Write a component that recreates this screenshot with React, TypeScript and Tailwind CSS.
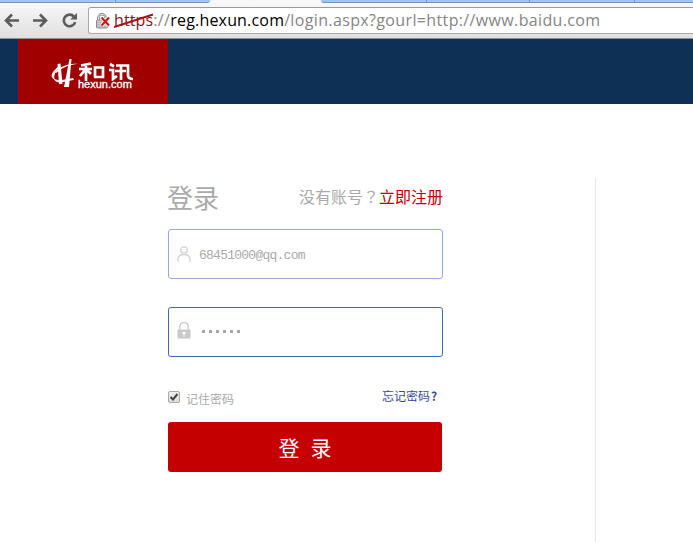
import React from "react";

const cjk = "font-['Noto_Sans_CJK_SC',sans-serif]";

function TabStrip() {
  return (
    <div className="flex h-[3px] shrink-0 bg-[#f7f7f7]">
      <div className="h-[3px] w-[115px] rounded-br-[2px] border-b border-[#7493bd] bg-[#9fc4f5]" />
      <div className="h-[3px] w-[95px] rounded-br-[3px] border-b border-l border-[#7493bd] bg-[#9fc4f5]" />
      <div className="w-[111px]" />
      <div className="h-[3px] w-[105px] rounded-bl-[3px] border-b border-[#7493bd] bg-[#9fc4f5]" />
      <div className="h-[3px] w-[103px] border-b border-l border-[#7493bd] bg-[#9fc4f5]" />
      <div className="h-[3px] w-[105px] border-b border-l border-[#7493bd] bg-[#9fc4f5]" />
      <div className="h-[3px] flex-1 border-b border-l border-[#7493bd] bg-[#9fc4f5]" />
    </div>
  );
}

function Toolbar() {
  return (
    <div className="flex h-9 shrink-0 border-b border-[#909090] bg-linear-to-b from-[#f8f8f8] to-[#dfdfdf]">
      <svg className="mt-[9px] ml-1 h-4 w-[74px] shrink-0" viewBox="0 0 74 16" fill="none" stroke="#5c5c5c" strokeWidth="2.6">
        <path d="M15 8.5H2M8 2.5L2 8.5L8 14.500" />
        <path d="M29 8.5H42M36 2.5L42 8.5L36 14.500" />
        <path d="M70 4.6A5.8 5.8 0 1 0 71.2 10.2" />
        <path d="M73 1V7.6H66.2Z" fill="#5c5c5c" stroke="none" />
      </svg>
      <div className="mt-1 ml-2.5 flex h-[27px] flex-1 rounded-l-[3px] border border-r-0 border-[#aaa] border-t-[#9a9a9a] bg-white">
        <svg className="mt-[5px] ml-1.5 h-[17px] w-[17px] shrink-0" viewBox="0 0 17 17">
          <path d="M3.5 8V4.8a3.5 3.5 0 0 1 7 0V8" fill="none" stroke="#8a8a8a" strokeWidth="2.6" />
          <path d="M3.5 8V4.8a3.5 3.5 0 0 1 7 0V8" fill="none" stroke="#ddd" strokeWidth="1" />
          <rect x="1.5" y="7" width="11" height="8" rx="1" fill="#ccc" stroke="#8a8a8a" />
          <path d="M2 9.5h9M2 11.5h9M2 13.5h9" stroke="#aaa" strokeWidth=".7" />
          <path d="M6.5 4.5L14 12.5M14 4.5L6.5 12.5" stroke="#fff" strokeWidth="4" />
          <path d="M6.5 4.5L14 12.5M14 4.5L6.5 12.5" stroke="#d01818" strokeWidth="2.2" />
        </svg>
        <div className="ml-[2px] font-['Open_Sans',sans-serif] text-[16px] leading-[24px] whitespace-nowrap text-[#858585]">
          <span className="relative inline-block tracking-[0.1px] text-[#8c1018]">
            https
            <svg className="absolute top-[5px] left-0 h-[16px] w-[40px]" viewBox="0 0 40 16">
              <path d="M0 14L39 1.5" stroke="#aa1018" strokeWidth="2" />
            </svg>
          </span>
          <span className="tracking-[0.4px]">://</span>
          <span className="tracking-[0.18px] text-black">reg.hexun.com</span>
          <span className="tracking-[0.36px]">/login.aspx?gourl=http://www.baidu.com</span>
        </div>
      </div>
    </div>
  );
}

function Logo() {
  return (
    <div className="ml-[18px] flex h-[65px] w-[150px] bg-[#a00000] pt-5 pl-[33px] text-white">
      <svg className="h-[30px] w-[27px] shrink-0" viewBox="0 0 27 30" fill="#fff">
        <path d="M6.500 5L9.500 4.500L11.500 25H8Z" />
        <path d="M18.500 0L20.500 0L18 28H13Z" />
        <path d="M7 8C4 11 1 14 1 16.500C1 20 5 22 11 21.400L22 19.500L22.500 20.500L11 22.800C5 23.600 2 21 3 16.500C3.500 14 5 11 8 9Z" stroke="#fff" strokeWidth=".8" />
        <path d="M4 13C9 8 17 4 27 5C18 5.500 11 9 5 14Z" />
      </svg>
      <div className="flex flex-col">
        <svg className="mt-[3px] h-[19px] w-[56px]" viewBox="0 0 56 19" fill="none" stroke="#fff" strokeWidth="2.700">
          <path d="M13 1.500L3 3.500M1 7H14M8 2V19M7 8L2 14M9 8L13 12M17 15V5.500H25V15H16M32 2L36 4.500M31 8H35V17L39 14M38 3.500H50V13Q50 17 55 17M37 9H48M43 3V18" />
        </svg>
        <div className="-mt-[1px] origin-left scale-x-[1.1] font-['Liberation_Sans',sans-serif] text-[10px] leading-[10px] [-webkit-text-stroke:0.3px_white]">hexun.com</div>
      </div>
    </div>
  );
}

function LoginForm() {
  return (
    <div className="w-[275px]">
      <div className="flex h-[51px] items-start justify-between whitespace-nowrap">
        <h1 className={`${cjk} mt-[3px] -ml-px text-[26px] leading-[32px] text-[#aaa]`}>登录</h1>
        <div className={`${cjk} mt-[6px] text-[16px] leading-6 text-[#aaa]`}>
          没有账号<span className="font-['Noto_Sans_CJK_TC',sans-serif]" lang="zh-TW">？</span>
          <a className="text-[#c00000]">立即注册</a>
        </div>
      </div>
      <div className="flex h-[50px] items-center rounded-[3px] border border-[#93addb] pl-2">
        <svg className="h-4 w-3.5" viewBox="0 0 14 16" fill="none" stroke="#d2d2d2" strokeWidth="1.3">
          <circle cx="7" cy="4" r="3.200" />
          <path d="M1 16V13.500Q1 8.500 7 8.500T13 13.500V16" />
        </svg>
        <span className="mt-[3px] ml-2 font-['Liberation_Mono',monospace] text-[13px] leading-5 tracking-[-0.75px] text-[#aaa]">68451000@qq.com</span>
      </div>
      <div className="mt-7 flex h-[50px] items-center rounded-[3px] border border-[#4469a8] pl-2">
        <svg className="-mt-1 h-[17px] w-[14px]" viewBox="0 0 14 17">
          <path d="M2.700 8V4.800a4.300 4.300 0 0 1 8.600 0V8" fill="none" stroke="#ccc" strokeWidth="1.400" />
          <path d="M.5 7.500h13v9H.5z" fill="#c9c9c9" />
          <path d="M5.500 10h3v2h-1v3h-1v-3h-1z" fill="#fff" />
        </svg>
        <div className="-mt-px ml-[11px] flex gap-1">
          {[0, 1, 2, 3, 4, 5].map((n) => (
            <i key={n} className="h-[3px] w-[3px] bg-[#a6a6a6]" />
          ))}
        </div>
      </div>
      <div className={`${cjk} flex h-[65px] items-start justify-between pt-[30px] text-[12px] leading-[18px]`}>
        <label className="flex text-[#aaa]">
          <span className="mt-1 mr-[6px] flex h-3 w-3 items-center justify-center rounded-[2px] border border-[#aaa] bg-linear-to-b from-[#eee] to-[#ddd]">
            <svg className="h-2.5 w-2.5 shrink-0" viewBox="0 0 10 10" fill="none" stroke="#444" strokeWidth="2">
              <path d="M1.500 5L4 7.500L8.500 2" />
            </svg>
          </span>
          <span className="mt-[3px]">记住密码</span>
        </label>
        <a className="mr-1 text-[#394d88]">忘记密码<b className="ml-px inline-block w-2">?</b></a>
      </div>
      <button className={`${cjk} flex h-[50px] w-[274px] items-center justify-center rounded-[3px] bg-[#c50000] pb-px text-[21px] leading-[30px] text-white`}>
        <span className="mr-[11px]">登</span>
        <span>录</span>
      </button>
    </div>
  );
}

export default function App() {
  return (
    <div className="flex h-[542px] w-[693px] flex-col overflow-hidden bg-white">
      <TabStrip />
      <Toolbar />
      <header className="h-[65px] shrink-0 bg-[#0d3054]">
        <Logo />
      </header>
      <main className="flex flex-1 pt-[74px] pl-[168px]">
        <LoginForm />
        <div className="ml-[152px] w-px bg-[#e8e8e8]" />
      </main>
    </div>
  );
}
